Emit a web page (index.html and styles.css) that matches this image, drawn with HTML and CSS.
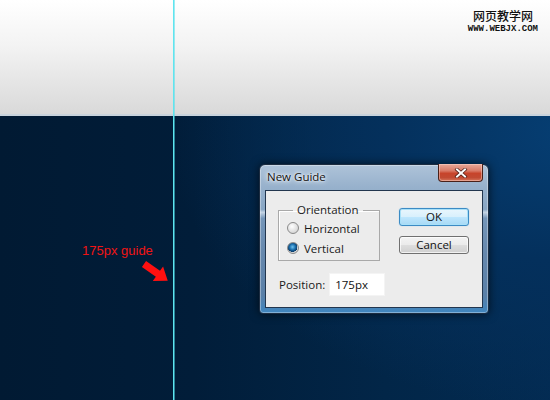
FILE: index.html
```html
<!DOCTYPE html>
<html>
<head>
<meta charset="utf-8">
<link rel="stylesheet" href="styles.css">
</head>
<body>
<div class="page">
  <div class="topband">
    <div class="watermark">
      <div class="wm-cn">网页教学网</div>
      <div class="wm-en">WWW.WEBJX.COM</div>
    </div>
  </div>
  <div class="canvas">
    <div class="note">175px guide</div>
    <svg class="arrow" width="34" height="28" viewBox="0 0 34 28">
      <g transform="translate(3 3) rotate(35)">
        <polygon points="0,-3.6 17,-3.6 17,-9 29,0 17,9 17,3.6 0,3.6" fill="#ff1010"/>
      </g>
    </svg>
    <div class="window">
      <div class="titlebar">
        <span class="title">New Guide</span>
        <div class="close">
          <svg width="14" height="10" viewBox="0 0 14 10"><path d="M3 1.5 L11 8.5 M11 1.5 L3 8.5" stroke="#4a1a12" stroke-width="3.4" stroke-linecap="square"/><path d="M3 1.5 L11 8.5 M11 1.5 L3 8.5" stroke="#ffffff" stroke-width="2" stroke-linecap="square"/></svg>
        </div>
      </div>
      <div class="client">
        <div class="toprow">
          <fieldset class="group">
            <legend>Orientation</legend>
            <div class="radio-row"><span class="radio"></span><span>Horizontal</span></div>
            <div class="radio-row"><span class="radio checked"></span><span>Vertical</span></div>
          </fieldset>
          <div class="buttons">
            <div class="btn btn-default">OK</div>
            <div class="btn">Cancel</div>
          </div>
        </div>
        <div class="pos-row">
          <span class="pos-label">Position:</span>
          <div class="pos-input">175px</div>
        </div>
      </div>
    </div>
  </div>
  <div class="guide"></div>
</div>
</body>
</html>
```

FILE: styles.css
```css
html, body {
  margin: 0;
  padding: 0;
}
body {
  width: 550px;
  height: 400px;
  overflow: hidden;
  font-family: "Open Sans", "Noto Sans", sans-serif;
}
.page {
  position: relative;
  width: 550px;
  height: 400px;
  display: flex;
  flex-direction: column;
}
.topband {
  height: 114px;
  flex: none;
  background: linear-gradient(to bottom, #ffffff 0%, #f3f3f3 40%, #d9d9d9 100%);
  border-bottom: 2px solid #c9d3dc;
  display: flex;
  justify-content: flex-end;
  align-items: flex-start;
}
.watermark {
  margin: 9px 12px 0 0;
  display: flex;
  flex-direction: column;
  align-items: center;
  color: #111;
}
.wm-cn {
  font-family: "Noto Sans CJK SC", sans-serif;
  font-size: 12px;
  line-height: 13px;
  font-weight: 500;
}
.wm-en {
  font-family: "Liberation Mono", monospace;
  font-weight: bold;
  font-size: 9px;
  line-height: 10px;
  margin-top: 2px;
}
.canvas {
  position: relative;
  flex: 1;
  background:
    radial-gradient(ellipse 480px 330px at 105% 5%, #063f74 0%, #04305c 40%, rgba(3,40,75,0) 85%),
    linear-gradient(to right, #011a33 0%, #011d39 35%, #022648 70%, #032b52 100%);
}
.guide {
  position: absolute;
  left: 173px;
  top: 0;
  width: 2px;
  height: 400px;
  background: linear-gradient(to right, #5ee6f0 0%, #5ee6f0 50%, rgba(80,220,232,0.55) 50%);
}
.note {
  position: absolute;
  left: 82px;
  top: 127px;
  color: #f01414;
  font-family: "Liberation Sans", Arial, sans-serif;
  font-size: 13px;
  line-height: 16px;
}
.arrow {
  position: absolute;
  left: 141px;
  top: 145px;
}
.window {
  position: absolute;
  left: 259px;
  top: 48px;
  width: 230px;
  height: 150px;
  box-sizing: border-box;
  border: 1px solid #1c2c40;
  border-radius: 6px 6px 4px 4px;
  background: linear-gradient(to bottom, #aec3d9 0%, #97b1cc 15%, #88a6c4 30%, #c4d4e4 32%, #7596b9 36%, #6688ad 60%, #5a80a8 88%, #3f86c0 100%);
  box-shadow: 0 0 10px rgba(0,0,0,0.65), inset 0 0 0 1px rgba(255,255,255,0.35);
  display: flex;
  flex-direction: column;
  padding: 0 5px 5px 5px;
}
.titlebar {
  height: 25px;
  flex: none;
  display: flex;
  align-items: flex-start;
  justify-content: space-between;
}
.title {
  margin: 5px 0 0 2px;
  font-size: 11.5px;
  line-height: 14px;
  color: #111;
  text-shadow: 0 0 6px #e8eff6, 0 0 4px #e8eff6, 0 0 2px #ffffff;
}
.close {
  width: 43px;
  height: 17px;
  margin-top: -1px;
  margin-right: 0;
  border: 1px solid #4a2119;
  border-top: none;
  border-radius: 0 0 4px 4px;
  background: linear-gradient(to bottom, #e9a99a 0%, #d97a66 40%, #c7442b 55%, #c14a32 80%, #d5775d 100%);
  box-shadow: inset 0 0 0 1px rgba(255,220,210,0.45);
  display: flex;
  align-items: center;
  justify-content: center;
}
.client {
  flex: 1;
  background: #ececec;
  border: 1px solid #22364e;
  padding: 11px 13px 0 12px;
  display: flex;
  flex-direction: column;
}
.toprow {
  display: flex;
  align-items: flex-start;
  justify-content: space-between;
}
.group {
  margin: 0;
  width: 102px;
  height: 59px;
  box-sizing: border-box;
  border: 1px solid #a9a9a9;
  padding: 0 0 0 8px;
  box-shadow: 1px 1px 0 #ffffff inset;
}
.group legend {
  margin-left: 6px;
  padding: 0 4px;
  font-size: 11.5px;
  line-height: 16px;
  color: #1a1a1a;
}
.radio-row {
  display: flex;
  align-items: center;
  gap: 5px;
  height: 20px;
  font-size: 11.5px;
  color: #1a1a1a;
}
.radio {
  width: 10px;
  height: 10px;
  border-radius: 50%;
  border: 1px solid #8a8a8a;
  background: radial-gradient(circle at 40% 35%, #ffffff 0%, #e6e6e6 45%, #c9c9c9 100%);
  flex: none;
}
.radio.checked {
  background:
    radial-gradient(circle at 45% 40%, #6fc3f0 0%, #1b6fae 35%, #0b3d6b 58%, rgba(0,0,0,0) 62%),
    radial-gradient(circle at 40% 35%, #ffffff 0%, #e6e6e6 45%, #c9c9c9 100%);
}
.buttons {
  display: flex;
  flex-direction: column;
  gap: 10px;
  margin-top: 6px;
}
.btn {
  width: 68px;
  height: 16px;
  border: 1px solid #707070;
  border-radius: 3px;
  background: linear-gradient(to bottom, #f3f3f3 0%, #ebebeb 48%, #dddddd 52%, #cfcfcf 100%);
  box-shadow: inset 0 0 0 1px rgba(255,255,255,0.7);
  font-size: 11.5px;
  line-height: 16px;
  text-align: center;
  color: #111;
}
.btn-default {
  border-color: #3c8bc4;
  background: linear-gradient(to bottom, #e9f6fd 0%, #d9f0fc 48%, #bee6fd 52%, #a7d9f5 100%);
  box-shadow: inset 0 0 0 1px #a8e0f8, 0 0 1px #6fc0ef;
}
.pos-row {
  display: flex;
  align-items: center;
  gap: 4px;
  margin-top: 12px;
  padding-left: 1px;
}
.pos-label {
  font-size: 11.5px;
  color: #1a1a1a;
}
.pos-input {
  width: 49px;
  height: 21px;
  background: #ffffff;
  border: 1px solid #f4f4f4;
  padding-left: 5px;
  font-size: 11.5px;
  line-height: 21px;
  color: #111;
}
```
